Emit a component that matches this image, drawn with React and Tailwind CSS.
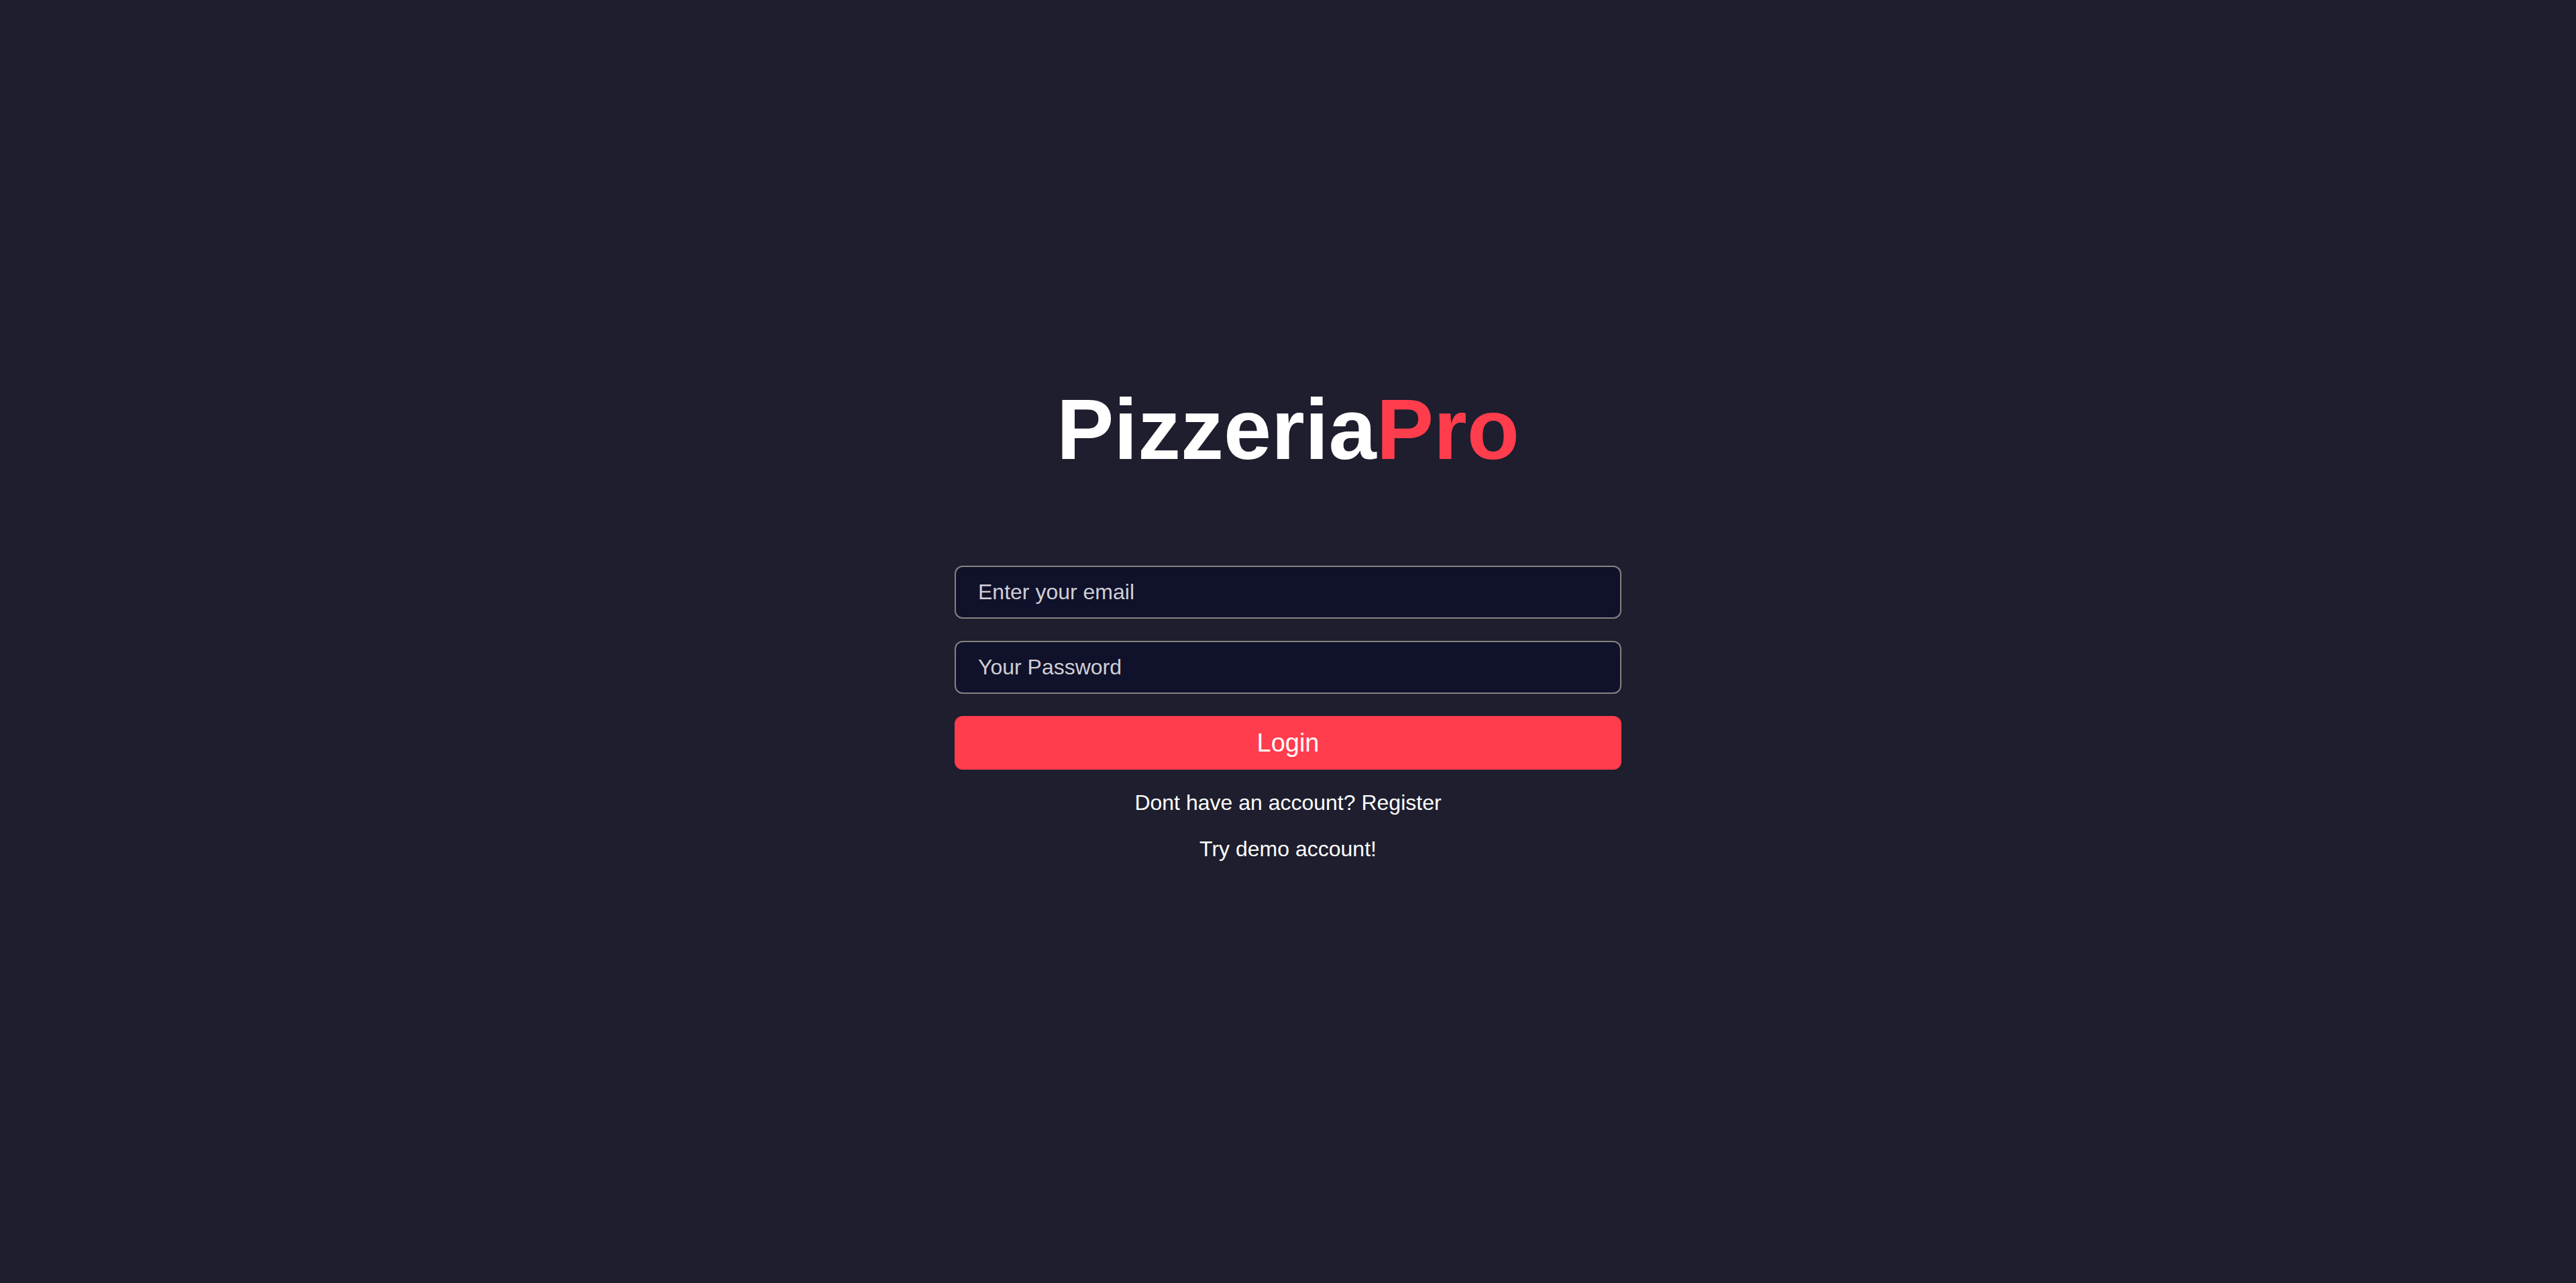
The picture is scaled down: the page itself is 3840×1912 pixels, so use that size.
import { useState } from 'react'

export default function App() {
  const [email, setEmail] = useState('')
  const [password, setPassword] = useState('')

  return (
    <div className="min-h-screen w-full bg-[#1e1e2e] font-['Liberation_Sans',Arial,sans-serif] text-white">
      <div className="flex flex-col items-center pt-[576px]">
        {/* Logo */}
        <h1 className="text-[128px] leading-none font-bold tracking-normal">
          <span className="text-white">Pizzeria</span>
          <span className="text-[#ff3d4c]">Pro</span>
        </h1>

        {/* Form */}
        <form className="mt-[139px] flex w-[994px] flex-col gap-[33px]" onSubmit={e => e.preventDefault()}>
          <input
            value={email}
            onChange={e => setEmail(e.target.value)}
            placeholder="Enter your email"
            className="h-[79px] w-full rounded-xl border-2 border-[#838383] bg-[#10112a] px-[33px] text-[32px] text-white placeholder:text-[#cfcfd6] outline-none"
          />
          <input
            value={password}
            onChange={e => setPassword(e.target.value)}
            type="password"
            placeholder="Your Password"
            className="h-[79px] w-full rounded-xl border-2 border-[#838383] bg-[#10112a] px-[33px] text-[32px] text-white placeholder:text-[#cfcfd6] outline-none"
          />
          <button type="submit" className="h-[80px] w-full rounded-xl bg-[#ff3d4c] text-[38px] text-white">
            Login
          </button>
        </form>

        <p className="mt-[31px] text-[32px] leading-[36px] text-white">Dont have an account? Register</p>
        <p className="mt-[33px] text-[32px] leading-[36px] text-white">Try demo account!</p>
      </div>
    </div>
  )
}
